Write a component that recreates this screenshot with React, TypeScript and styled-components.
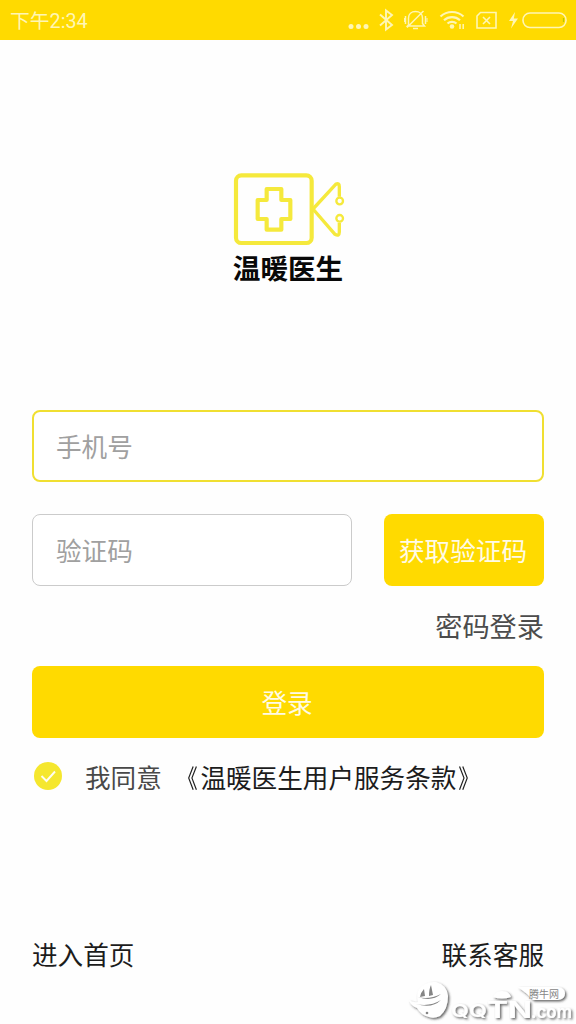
import React from 'react';
import styled, { createGlobalStyle } from 'styled-components';

const GlobalStyle = createGlobalStyle`
  * { box-sizing: border-box; }
  body { margin: 0; background: #fff; }
  input, button { font: inherit; outline: none; }
`;

const Screen = styled.div`
  position: relative;
  display: flex;
  flex-direction: column;
  width: 576px;
  height: 1024px;
  overflow: hidden;
  background: #fefefe;
  color: #1c1c1c;
  font-family: Roboto, 'Noto Sans CJK SC', sans-serif;
  font-size: 25.6px;
  line-height: 36px;
`;

const StatusBar = styled.header`
  display: flex;
  justify-content: space-between;
  height: 40px;
  flex: none;
  padding-left: 10px;
  background: #ffda00;
  color: #fff6b4;
`;

const Clock = styled.span`
  font-size: 19.8px;
  line-height: 44px;
`;

const Brand = styled.div`
  display: flex;
  flex-direction: column;
  align-items: center;
  height: 370.4px;
  padding-top: 120px;
`;

const BrandName = styled.div`
  margin-top: -9px;
  color: #080808;
  font-family: 'Noto Sans CJK SC', sans-serif;
  font-size: 27.6px;
  font-weight: 700;
  line-height: 32px;
`;

const Form = styled.main`
  display: flex;
  flex-direction: column;
  padding: 0 32px;
`;

const Field = styled.input<{ $active?: boolean }>`
  flex: 1 1 0;
  min-width: 0;
  height: 72px;
  padding: ${(p) => (p.$active ? '3px 22px 0' : '3px 23px 0')};
  border: ${(p) => (p.$active ? '2px solid #f0df31' : '1.6px solid #cbcbcb')};
  border-radius: 8px;
  background: #fff;
  &::placeholder { color: #a0a0a0; opacity: 1; }
`;

const FieldRow = styled.div<{ $gapBelow: string }>`
  display: flex;
  gap: 32px;
  margin-bottom: ${(p) => p.$gapBelow};
`;

const Button = styled.button<{ $width: string }>`
  width: ${(p) => p.$width};
  height: 72px;
  padding: 3px 2px 0 0;
  border: 0;
  border-radius: 8px;
  background: #ffda00;
  color: #fffbe6;
  white-space: nowrap;
`;

const PasswordLink = styled.a`
  align-self: flex-end;
  height: 48px;
  margin-top: -10px;
  margin-bottom: 10px;
  color: #4c4c4c;
  font-size: 27.2px;
  line-height: 41px;
`;

const Agreement = styled.div`
  display: flex;
  align-items: center;
  height: 40px;
  margin-top: 20.5px;
  color: #484848;
  white-space: nowrap;
`;

const Check = styled.svg`
  margin: -6px 22px 0 1px;
`;

const Terms = styled.a`
  margin-left: 13px;
  color: #1c1c1c;
`;

const Bracket = styled.span`
  display: inline-block;
  transform: scaleX(0.8);
  transform-origin: 44% center;
`;

const Footer = styled.footer`
  display: flex;
  justify-content: space-between;
  margin-top: auto;
  padding: 0 32px 50px;
`;

const Watermark = styled.svg`
  position: absolute;
  left: 408px;
  top: 978px;
`;

const StatusIcons = () => (
  <svg width="236" height="40" viewBox="340 0 236 40" fill="none" stroke="#fff6b4" strokeWidth="1.6">
    <g fill="#fff6b4" stroke="none">
      <circle cx="351" cy="26.5" r="2.5" />
      <circle cx="358.5" cy="26.5" r="2.5" />
      <circle cx="366" cy="26.5" r="2.5" />
      <path d="M515 12 509 21h4l-2 7.500 7-10h-4.200z" />
      <circle cx="452" cy="26.500" r="2.300" />
    </g>
    <path d="m380 14.500 12 10.500-6 4.500V10.500l6 4.500-12 10.500" strokeWidth="1.900" />
    <path d="M408.500 25V18c0-4 3-6.500 7-6.500s7 2.500 7 6.500v5.500l2 2.500h-17zM407 27.500 423.500 11M413 28.500h5M405.500 16v8M425.500 16v8" strokeWidth="1.500" />
    <path d="M404.500 18v4M427 18v4" strokeWidth="1" />
    <path d="M440.500 16.500c6.500-6 16.500-6 23 0M444 20.200c4.500-4.200 11.500-4.200 16 0M447.500 23.500c2.500-2.300 6.500-2.300 9 0" strokeWidth="2.200" />
    <path d="M460 24v5M463.200 24v5" strokeWidth="1.500" />
    <path d="M480.500 12.500H496v15.500h-19V16zM483 17l7 7m0-7-7 7" />
    <rect x="523" y="13" width="43" height="14.500" rx="7" />
    <path d="M563.500 18v4" stroke="#b7c500" strokeWidth="1.200" />
  </svg>
);

const CameraLogo = () => (
  <svg width="136" height="100" viewBox="6 0 408 300" overflow="visible" fill="none" stroke="#f5e93c" strokeWidth="12.500" strokeLinejoin="round">
    <g transform="translate(6 0)">
      <rect x="48" y="46" width="227" height="203" rx="16" />
      <path d="M140 87h44v33h27v57h-27v32h-44v-32h-27v-57h27z" />
      <path d="M358 110V80q0-13-11-7L279 147l66 76q13 7 13-7v-28" strokeWidth="10" />
      <circle cx="359" cy="123" r="10" strokeWidth="7" fill="#fefefe" />
      <circle cx="359" cy="175" r="10" strokeWidth="7" fill="#fefefe" />
    </g>
  </svg>
);

export default function App() {
  return (
    <Screen>
      <GlobalStyle />
      <StatusBar>
        <Clock>下午2:34</Clock>
        <StatusIcons />
      </StatusBar>
      <Brand>
        <CameraLogo />
        <BrandName>温暖医生</BrandName>
      </Brand>
      <Form>
        <FieldRow $gapBelow="32.1px">
          <Field $active placeholder="手机号" />
        </FieldRow>
        <FieldRow $gapBelow="32px">
          <Field placeholder="验证码" />
          <Button $width="160px">获取验证码</Button>
        </FieldRow>
        <PasswordLink>密码登录</PasswordLink>
        <Button $width="100%">登录</Button>
        <Agreement>
          <Check width="30" height="30" viewBox="0 0 30 30">
            <circle cx="15" cy="15" r="14" fill="#f5e72e" />
            <path d="m8.500 15 5 5 8.500-9.500" fill="none" stroke="#fffdf0" strokeWidth="1.900" />
          </Check>
          <span>我同意</span>
          <Terms>
            <Bracket>《</Bracket>温暖医生用户服务条款<Bracket>》</Bracket>
          </Terms>
        </Agreement>
      </Form>
      <Footer>
        <span>进入首页</span>
        <span>联系客服</span>
      </Footer>
      <Watermark width="168" height="46" viewBox="408 978 168 46">
        <defs>
          <filter id="shade" x="-10%" y="-20%" width="125%" height="150%">
            <feDropShadow dx="1.500" dy="1.500" stdDeviation="1.100" floodColor="#333" floodOpacity="0.75" />
          </filter>
        </defs>
        <g filter="url(#shade)" fill="#fff">
          <path d="M419 989q7-8 17-7 11 3 12 14 0 13-8 20-6 3-11 1-8-2-12-9-6-2-8-8 4 3 9 2-2-7 1-13z" />
          <path d="M493 997q2-6 9-6 7 0 9 6-9 3-18 0zM518 987h40q7 1 7 6.500t-7 6.500h-25l-6-6z" />
          <text x="451" y="1017" fontFamily="Inter, sans-serif" fontSize="17" fontWeight="600" textLength="36" lengthAdjust="spacingAndGlyphs">QQ</text>
          <text x="487" y="1018" fontFamily="Inter, sans-serif" fontSize="23" fontWeight="700" textLength="45" lengthAdjust="spacingAndGlyphs">TN</text>
          <text x="531" y="1018" fontFamily="Inter, sans-serif" fontSize="17" fontWeight="600" textLength="41" lengthAdjust="spacingAndGlyphs">.com</text>
        </g>
        <g fill="#858585">
          <path d="M431 985l2 10-4 1q0-7 2-11zM424 989l1 7-5 1q1-5 4-8z" />
          <path d="M418 997q11 3 23-3-9 8-23 3zM416 1004q14 3 25-4-9 9-25 4z" />
          <circle cx="427" cy="1013" r="1.300" />
        </g>
        <text x="529" y="998" fontFamily="'Noto Sans CJK SC', sans-serif" fontSize="10" fill="#858585">腾牛网</text>
      </Watermark>
    </Screen>
  );
}
